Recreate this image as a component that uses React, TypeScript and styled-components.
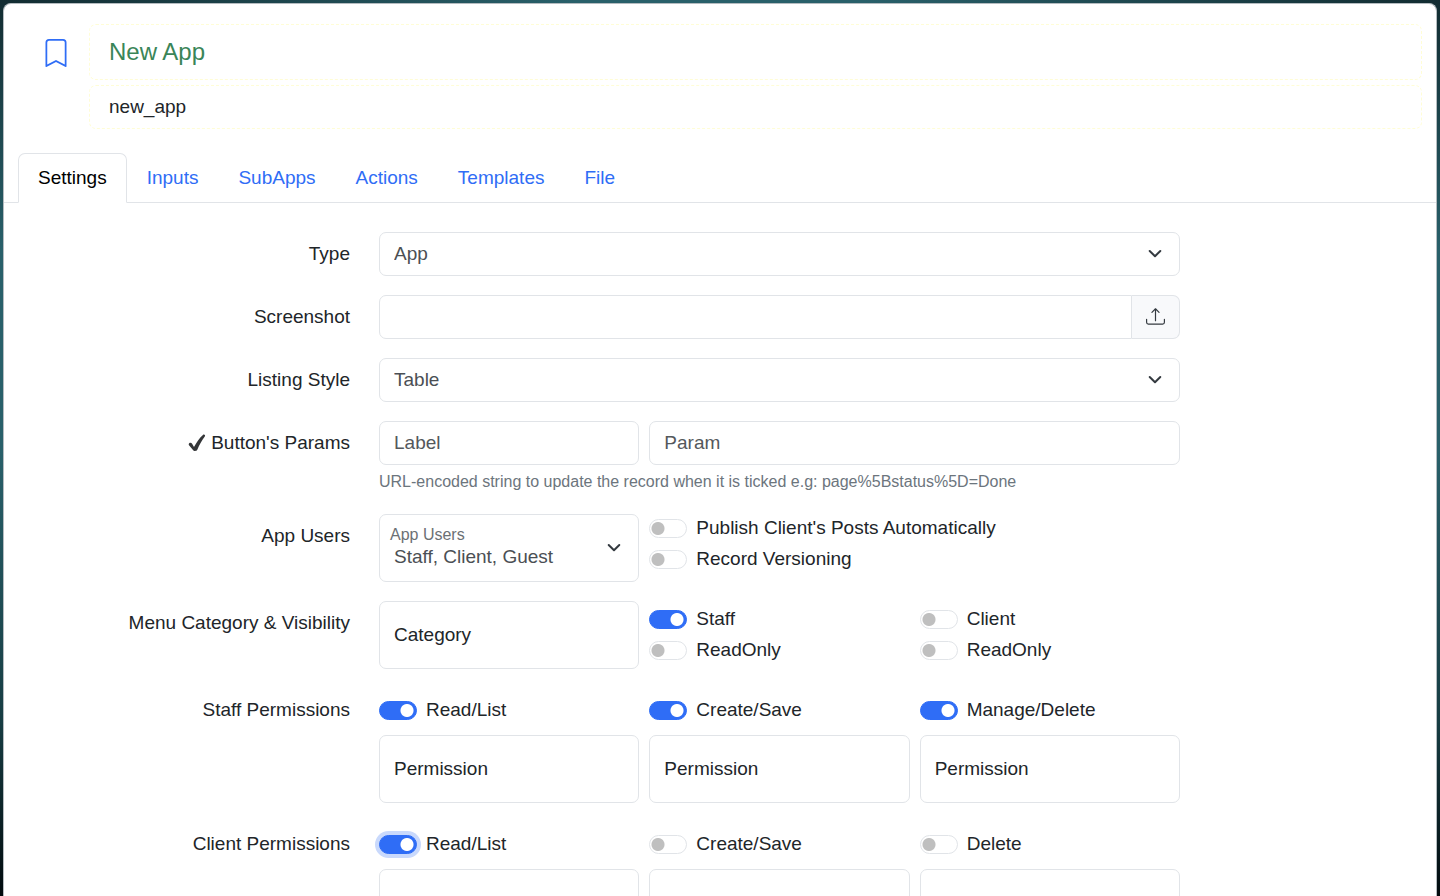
import React from "react";
import styled, { createGlobalStyle, css } from "styled-components";
import { BsBookmark, BsUpload } from "react-icons/bs";

const GlobalStyle = createGlobalStyle`
  *, *::before, *::after { box-sizing: border-box; }
  html { scrollbar-width: none; }
  body {
    margin: 0;
    min-height: 100vh;
    font-family: "Liberation Sans", Arial, Helvetica, sans-serif;
    font-size: 19px;
    line-height: 28px;
    color: #212529;
    background-color: #061316;
  }
  input, select, button { font: inherit; color: inherit; }
`;

const Backdrop = styled.div`
  padding: 3px 3px 0;
  background: linear-gradient(180deg, #122c31 0, #29606a 250px, #29606a 450px, #173d43 720px, #020b0e 896px);
`;

const TopGlow = styled.div`
  margin: -3px -3px 0;
  height: 3px;
  background: linear-gradient(90deg, #122c31, #29606a 40%, #29606a 60%, #122c31);
`;

const Panel = styled.main`
  border: 1px solid #b5bcc0;
  border-bottom: 0;
  border-radius: 8px 8px 0 0;
  background: #fff;
  min-height: 100vh;
  padding: 20px 0 24px;
`;

const Header = styled.header`
  display: grid;
  grid-template-columns: 56px minmax(0, 1fr);
  column-gap: 15px;
  padding: 0 14px;
`;

const BookmarkButton = styled.button`
  display: flex;
  justify-content: flex-end;
  align-items: center;
  align-self: start;
  width: 100%;
  height: 56px;
  padding: 2px 4px 0 0;
  border: 0;
  background: none;
  color: #2f6df6;
`;

const TitleFields = styled.div`
  display: grid;
  row-gap: 5px;
`;

const TitleInput = styled.input<{ $heading?: boolean }>`
  width: 100%;
  min-width: 0;
  height: 44px;
  padding: 0 19px;
  border: 1px dashed #fffdd6;
  border-radius: 7px;
  background: transparent;
  outline: 0;
  ${({ $heading }) =>
    $heading &&
    css`
      && {
        height: 56px;
        font-size: 24px;
        color: #3a8558;
      }
    `}
`;

const Tabs = styled.nav`
  display: flex;
  margin-top: 24px;
  padding: 0 14px;
  border-bottom: 1px solid #e1e4e8;
`;

const Tab = styled.a<{ $active?: boolean }>`
  padding: 10px 19px;
  margin-bottom: -1px;
  border: 1px solid transparent;
  border-radius: 7px 7px 0 0;
  color: #2f6df6;
  text-decoration: none;
  ${({ $active }) =>
    $active &&
    css`
      color: #000;
      background: #fff;
      border-color: #e1e4e8 #e1e4e8 #fff;
    `}
`;

const Form = styled.form`
  display: grid;
  row-gap: 19px;
  padding-top: 29px;
`;

const Row = styled.div`
  display: grid;
  grid-template-columns: minmax(0, 346fr) minmax(0, 801fr) minmax(0, 227fr);
  column-gap: 29px;
  align-items: start;
`;

const RowLabel = styled.label`
  display: flex;
  justify-content: flex-end;
  align-items: center;
  gap: 5px;
  padding: 8px 0;
  white-space: nowrap;
`;

const Thirds = styled.div`
  display: grid;
  grid-template-columns: repeat(3, minmax(0, 1fr));
  column-gap: 10px;
`;

const Wide = styled.div`
  grid-column: span 2;
  display: grid;
`;

const controlBox = css`
  display: block;
  width: 100%;
  min-width: 0;
  border: 1px solid #e1e4e8;
  border-radius: 7px;
  background-color: #fff;
  outline: 0;
`;

const TextInput = styled.input<{ $tall?: boolean }>`
  ${controlBox}
  height: ${({ $tall }) => ($tall ? 68 : 44)}px;
  padding: 0 14px;
  &::placeholder {
    color: ${({ $tall }) => ($tall ? "#212529" : "#54585c")};
    opacity: 1;
  }
  &:disabled::placeholder { color: #c9cbcd; }
`;

const SelectWrap = styled.div`
  position: relative;
`;

const Select = styled.select<{ $floating?: boolean }>`
  ${controlBox}
  appearance: none;
  height: ${({ $floating }) => ($floating ? 68 : 44)}px;
  padding: ${({ $floating }) => ($floating ? "18px 44px 0 14px" : "0 44px 0 14px")};
  color: #4b4f54;
`;

const Chevron = styled.svg`
  position: absolute;
  right: 18px;
  top: 50%;
  margin-top: -8px;
  width: 14px;
  height: 14px;
  fill: none;
  stroke: #343a40;
  stroke-width: 2;
  stroke-linecap: round;
  stroke-linejoin: round;
  pointer-events: none;
`;

const FloatingLabel = styled.label`
  position: absolute;
  left: 11px;
  top: 10px;
  font-size: 16px;
  line-height: 22px;
  color: #6c7074;
  pointer-events: none;
`;

const UploadGroup = styled.div`
  display: flex;
  ${TextInput} {
    flex: 1;
    border-radius: 7px 0 0 7px;
  }
`;

const UploadButton = styled.button`
  display: flex;
  align-items: center;
  justify-content: center;
  width: 48px;
  border: 1px solid #e1e4e8;
  border-left: 0;
  border-radius: 0 7px 7px 0;
  background: #f8f9fb;
  padding: 0 0 2px;
  color: #343a40;
`;

const Help = styled.p`
  margin: 4px 0 0;
  font-size: 16px;
  line-height: 26px;
  color: #6c757d;
`;

const SwitchStack = styled.div<{ $top?: number; $wide?: boolean }>`
  display: grid;
  align-content: start;
  row-gap: 3px;
  padding-top: ${({ $top = 0 }) => $top}px;
  grid-column: ${({ $wide }) => ($wide ? "span 2" : "auto")};
`;

const PermissionCell = styled.div`
  display: grid;
  row-gap: 11px;
  padding-top: 8px;
`;

const SwitchLabel = styled.label`
  display: flex;
  align-items: center;
  gap: 9px;
  white-space: nowrap;
`;

const SwitchInput = styled.input<{ $ring?: boolean }>`
  appearance: none;
  flex: none;
  width: 38px;
  height: 19px;
  margin: 0;
  border: 1px solid #e1e4e8;
  border-radius: 10px;
  background: #fff radial-gradient(circle at 8px 50%, #bfbfbf 6px, transparent 7px);
  &:checked {
    border-color: #2f6df6;
    background: #2f6df6 radial-gradient(circle at 27px 50%, #fff 6px, transparent 7px);
  }
  box-shadow: ${({ $ring }) => ($ring ? "0 0 0 4px #c9d9fc" : "none")};
`;

function Switch({ label, on, ring }: { label: string; on?: boolean; ring?: boolean }) {
  return (
    <SwitchLabel>
      <SwitchInput type="checkbox" role="switch" defaultChecked={on} $ring={ring} />
      {label}
    </SwitchLabel>
  );
}

function DropDown({ id, value, floating }: { id: string; value: string; floating?: string }) {
  return (
    <SelectWrap>
      <Select id={id} $floating={!!floating} defaultValue={value}>
        <option>{value}</option>
      </Select>
      {floating && <FloatingLabel htmlFor={id}>{floating}</FloatingLabel>}
      <Chevron viewBox="0 0 14 14" aria-hidden="true">
        <path d="M1.700 5 7 10.200 12.300 5" />
      </Chevron>
    </SelectWrap>
  );
}

function HeavyCheck() {
  return (
    <svg width="18" height="18" viewBox="0 0 18 18" aria-hidden="true">
      <path
        fill="#343638"
        d="M1.200 9.200c1-.8 2.300-.5 2.900.6l1.900 3.300C8.500 8.300 11.300 4.300 14.900 1c.6-.6 1.600-.5 2 .1.300.5.200 1-.1 1.400-3 3.900-5.300 8.200-7.500 13.300-.7 1.500-3.400 1.600-4.300.1L1 11.200c-.4-.7-.4-1.500.2-2Z"
      />
    </svg>
  );
}

type Permission = { label: string; on?: boolean; ring?: boolean; disabled?: boolean };

function PermissionRow({ title, items }: { title: string; items: Permission[] }) {
  return (
    <Row>
      <RowLabel as="div">{title}</RowLabel>
      <Thirds role="group" aria-label={title}>
        {items.map((p) => (
          <PermissionCell key={p.label}>
            <Switch label={p.label} on={p.on} ring={p.ring} />
            <TextInput $tall placeholder="Permission" aria-label={`${p.label} permission`} disabled={p.disabled} />
          </PermissionCell>
        ))}
      </Thirds>
    </Row>
  );
}

const tabs = ["Settings", "Inputs", "SubApps", "Actions", "Templates", "File"];

export default function App() {
  return (
    <>
      <GlobalStyle />
      <Backdrop>
        <TopGlow />
        <Panel>
          <Header>
            <BookmarkButton type="button" aria-label="Bookmark">
              <BsBookmark size={28} />
            </BookmarkButton>
            <TitleFields>
              <TitleInput $heading defaultValue="New App" aria-label="App name" />
              <TitleInput defaultValue="new_app" aria-label="App identifier" />
            </TitleFields>
          </Header>
          <Tabs>
            {tabs.map((t, i) => (
              <Tab key={t} href={`#${t.toLowerCase()}`} $active={i === 0}>
                {t}
              </Tab>
            ))}
          </Tabs>
          <Form>
            <Row>
              <RowLabel htmlFor="type">Type</RowLabel>
              <DropDown id="type" value="App" />
            </Row>
            <Row>
              <RowLabel htmlFor="screenshot">Screenshot</RowLabel>
              <UploadGroup>
                <TextInput id="screenshot" type="text" />
                <UploadButton type="button" aria-label="Upload screenshot">
                  <BsUpload size={19} />
                </UploadButton>
              </UploadGroup>
            </Row>
            <Row>
              <RowLabel htmlFor="listing">Listing Style</RowLabel>
              <DropDown id="listing" value="Table" />
            </Row>
            <Row>
              <RowLabel htmlFor="button-label">
                <HeavyCheck />
                Button's Params
              </RowLabel>
              <div>
                <Thirds>
                  <TextInput id="button-label" placeholder="Label" />
                  <Wide>
                    <TextInput placeholder="Param" aria-label="Param" />
                  </Wide>
                </Thirds>
                <Help>URL-encoded string to update the record when it is ticked e.g: page%5Bstatus%5D=Done</Help>
              </div>
            </Row>
            <Row>
              <RowLabel htmlFor="users">App Users</RowLabel>
              <Thirds>
                <DropDown id="users" value="Staff, Client, Guest" floating="App Users" />
                <SwitchStack $wide>
                  <Switch label="Publish Client's Posts Automatically" />
                  <Switch label="Record Versioning" />
                </SwitchStack>
              </Thirds>
            </Row>
            <Row>
              <RowLabel htmlFor="category">Menu Category &amp; Visibility</RowLabel>
              <Thirds>
                <TextInput $tall id="category" placeholder="Category" />
                <SwitchStack $top={4}>
                  <Switch label="Staff" on />
                  <Switch label="ReadOnly" />
                </SwitchStack>
                <SwitchStack $top={4}>
                  <Switch label="Client" />
                  <Switch label="ReadOnly" />
                </SwitchStack>
              </Thirds>
            </Row>
            <PermissionRow
              title="Staff Permissions"
              items={[
                { label: "Read/List", on: true },
                { label: "Create/Save", on: true },
                { label: "Manage/Delete", on: true },
              ]}
            />
            <PermissionRow
              title="Client Permissions"
              items={[
                { label: "Read/List", on: true, ring: true, disabled: true },
                { label: "Create/Save", disabled: true },
                { label: "Delete", disabled: true },
              ]}
            />
          </Form>
        </Panel>
      </Backdrop>
    </>
  );
}
